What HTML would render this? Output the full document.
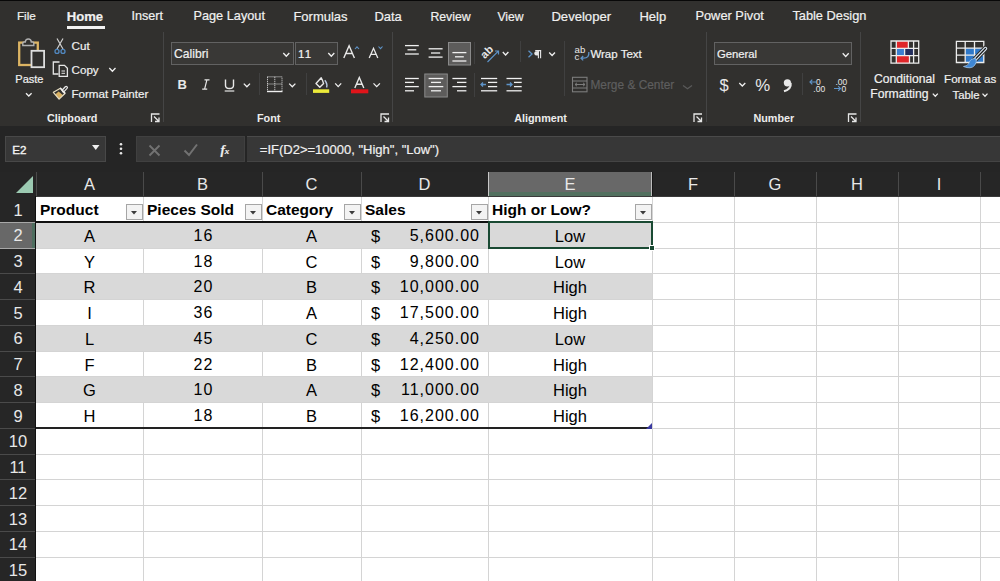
<!DOCTYPE html>
<html><head><meta charset="utf-8">
<style>
*{box-sizing:border-box;margin:0;padding:0}
html,body{width:1000px;height:581px;overflow:hidden;background:#31302e;font-family:"Liberation Sans",sans-serif}
body{position:relative}
.a{position:absolute}
.t{position:absolute;white-space:nowrap;color:#f4f4f4;font-size:13px;line-height:15px;-webkit-text-stroke:0.2px currentColor}
.ch{position:absolute;top:172px;height:24px;color:#e8e8e8;font-size:16.5px;line-height:25px;text-align:center}
.rh{position:absolute;left:0;width:36px;color:#e8e8e8;font-size:16.5px;text-align:center;padding-top:1.5px}
.c{position:absolute;color:#000;font-size:16.5px;line-height:18px;white-space:nowrap}
.b{font-weight:bold;font-size:15.5px}
</style></head><body>

<div class="a" style="left:0;top:0;width:1000px;height:1px;background:#080808"></div>
<div class="a" style="left:0;top:1px;width:1000px;height:125px;background:#31302e"></div>
<div class="a" style="left:0;top:126px;width:1000px;height:46px;background:#252525"></div>
<div class="a" style="left:0;top:172px;width:1000px;height:24px;background:#262626"></div>
<div class="a" style="left:0;top:196px;width:36px;height:385px;background:#262626"></div>
<div class="a" style="left:36px;top:196px;width:964px;height:385px;background:#fff"></div>
<div class="a" style="left:36px;top:221.75px;width:616px;height:25.75px;background:#d9d9d9"></div>
<div class="a" style="left:36px;top:273.25px;width:616px;height:25.75px;background:#d9d9d9"></div>
<div class="a" style="left:36px;top:324.75px;width:616px;height:25.75px;background:#d9d9d9"></div>
<div class="a" style="left:36px;top:376.25px;width:616px;height:25.75px;background:#d9d9d9"></div>
<div class="a" style="left:143px;top:196px;width:1px;height:385px;background:#d4d4d4"></div>
<div class="a" style="left:262px;top:196px;width:1px;height:385px;background:#d4d4d4"></div>
<div class="a" style="left:361px;top:196px;width:1px;height:385px;background:#d4d4d4"></div>
<div class="a" style="left:488px;top:196px;width:1px;height:385px;background:#d4d4d4"></div>
<div class="a" style="left:652px;top:196px;width:1px;height:385px;background:#d4d4d4"></div>
<div class="a" style="left:734px;top:196px;width:1px;height:385px;background:#d4d4d4"></div>
<div class="a" style="left:816px;top:196px;width:1px;height:385px;background:#d4d4d4"></div>
<div class="a" style="left:898px;top:196px;width:1px;height:385px;background:#d4d4d4"></div>
<div class="a" style="left:980px;top:196px;width:1px;height:385px;background:#d4d4d4"></div>
<div class="a" style="left:36px;top:221.75px;width:964px;height:1px;background:#d4d4d4"></div>
<div class="a" style="left:36px;top:247.5px;width:964px;height:1px;background:#d4d4d4"></div>
<div class="a" style="left:36px;top:273.25px;width:964px;height:1px;background:#d4d4d4"></div>
<div class="a" style="left:36px;top:299.0px;width:964px;height:1px;background:#d4d4d4"></div>
<div class="a" style="left:36px;top:324.75px;width:964px;height:1px;background:#d4d4d4"></div>
<div class="a" style="left:36px;top:350.5px;width:964px;height:1px;background:#d4d4d4"></div>
<div class="a" style="left:36px;top:376.25px;width:964px;height:1px;background:#d4d4d4"></div>
<div class="a" style="left:36px;top:402.0px;width:964px;height:1px;background:#d4d4d4"></div>
<div class="a" style="left:36px;top:427.75px;width:964px;height:1px;background:#d4d4d4"></div>
<div class="a" style="left:36px;top:453.5px;width:964px;height:1px;background:#d4d4d4"></div>
<div class="a" style="left:36px;top:479.25px;width:964px;height:1px;background:#d4d4d4"></div>
<div class="a" style="left:36px;top:505.0px;width:964px;height:1px;background:#d4d4d4"></div>
<div class="a" style="left:36px;top:530.75px;width:964px;height:1px;background:#d4d4d4"></div>
<div class="a" style="left:36px;top:556.5px;width:964px;height:1px;background:#d4d4d4"></div>
<div class="a" style="left:36px;top:582.25px;width:964px;height:1px;background:#d4d4d4"></div>
<div class="a" style="left:36px;top:222.75px;width:616px;height:24.75px;background:#d9d9d9"></div>
<div class="a" style="left:36px;top:274.25px;width:616px;height:24.75px;background:#d9d9d9"></div>
<div class="a" style="left:36px;top:325.75px;width:616px;height:24.75px;background:#d9d9d9"></div>
<div class="a" style="left:36px;top:377.25px;width:616px;height:24.75px;background:#d9d9d9"></div>
<div class="a" style="left:36px;top:172px;width:1px;height:24px;background:#4a4a4a"></div>
<div class="a" style="left:143px;top:172px;width:1px;height:24px;background:#4a4a4a"></div>
<div class="a" style="left:262px;top:172px;width:1px;height:24px;background:#4a4a4a"></div>
<div class="a" style="left:361px;top:172px;width:1px;height:24px;background:#4a4a4a"></div>
<div class="a" style="left:488px;top:172px;width:1px;height:24px;background:#4a4a4a"></div>
<div class="a" style="left:652px;top:172px;width:1px;height:24px;background:#4a4a4a"></div>
<div class="a" style="left:734px;top:172px;width:1px;height:24px;background:#4a4a4a"></div>
<div class="a" style="left:816px;top:172px;width:1px;height:24px;background:#4a4a4a"></div>
<div class="a" style="left:898px;top:172px;width:1px;height:24px;background:#4a4a4a"></div>
<div class="a" style="left:980px;top:172px;width:1px;height:24px;background:#4a4a4a"></div>
<div class="a" style="left:0;top:221.75px;width:36px;height:1px;background:#4a4a4a"></div>
<div class="a" style="left:0;top:247.5px;width:36px;height:1px;background:#4a4a4a"></div>
<div class="a" style="left:0;top:273.25px;width:36px;height:1px;background:#4a4a4a"></div>
<div class="a" style="left:0;top:299.0px;width:36px;height:1px;background:#4a4a4a"></div>
<div class="a" style="left:0;top:324.75px;width:36px;height:1px;background:#4a4a4a"></div>
<div class="a" style="left:0;top:350.5px;width:36px;height:1px;background:#4a4a4a"></div>
<div class="a" style="left:0;top:376.25px;width:36px;height:1px;background:#4a4a4a"></div>
<div class="a" style="left:0;top:402.0px;width:36px;height:1px;background:#4a4a4a"></div>
<div class="a" style="left:0;top:427.75px;width:36px;height:1px;background:#4a4a4a"></div>
<div class="a" style="left:0;top:453.5px;width:36px;height:1px;background:#4a4a4a"></div>
<div class="a" style="left:0;top:479.25px;width:36px;height:1px;background:#4a4a4a"></div>
<div class="a" style="left:0;top:505.0px;width:36px;height:1px;background:#4a4a4a"></div>
<div class="a" style="left:0;top:530.75px;width:36px;height:1px;background:#4a4a4a"></div>
<div class="a" style="left:0;top:556.5px;width:36px;height:1px;background:#4a4a4a"></div>
<div class="a" style="left:0;top:582.25px;width:36px;height:1px;background:#4a4a4a"></div>
<div class="a" style="left:488px;top:172px;width:164px;height:24px;background:#686868"></div>
<div class="a" style="left:488px;top:172px;width:1px;height:24px;background:#c8c8c8"></div>
<div class="a" style="left:489px;top:192px;width:163px;height:4px;background:#52705f"></div>
<div class="a" style="left:651px;top:172px;width:1px;height:24px;background:#bdbdbd"></div>
<div class="a" style="left:652px;top:172px;width:1px;height:24px;background:#151515"></div>
<div class="a" style="left:0;top:221.75px;width:36px;height:25.75px;background:#686868"></div>
<div class="a" style="left:0;top:221.75px;width:36px;height:1px;background:#a8a8a8"></div>
<div class="a" style="left:0;top:247.5px;width:36px;height:1px;background:#a8a8a8"></div>
<div class="a" style="left:32px;top:222.75px;width:4px;height:24.75px;background:#4e6e5f"></div>
<div class="a" style="left:36px;top:196px;width:964px;height:1px;background:#3a3a3a"></div>
<div class="a" style="left:35px;top:196px;width:1px;height:385px;background:#111"></div>
<svg class="a" style="left:0;top:172px" width="36" height="24"><path d="M33 4 L33 21 L16 21 Z" fill="#9ccab2"/></svg>
<div class="ch" style="left:36px;width:107px">A</div>
<div class="ch" style="left:143px;width:119px">B</div>
<div class="ch" style="left:262px;width:99px">C</div>
<div class="ch" style="left:361px;width:127px">D</div>
<div class="ch" style="left:488px;width:164px">E</div>
<div class="ch" style="left:652px;width:82px">F</div>
<div class="ch" style="left:734px;width:82px">G</div>
<div class="ch" style="left:816px;width:82px">H</div>
<div class="ch" style="left:898px;width:82px">I</div>
<div class="rh" style="top:196.0px;height:25.75px;line-height:25.75px">1</div>
<div class="rh" style="top:221.75px;height:25.75px;line-height:25.75px">2</div>
<div class="rh" style="top:247.5px;height:25.75px;line-height:25.75px">3</div>
<div class="rh" style="top:273.25px;height:25.75px;line-height:25.75px">4</div>
<div class="rh" style="top:299.0px;height:25.75px;line-height:25.75px">5</div>
<div class="rh" style="top:324.75px;height:25.75px;line-height:25.75px">6</div>
<div class="rh" style="top:350.5px;height:25.75px;line-height:25.75px">7</div>
<div class="rh" style="top:376.25px;height:25.75px;line-height:25.75px">8</div>
<div class="rh" style="top:402.0px;height:25.75px;line-height:25.75px">9</div>
<div class="rh" style="top:427.75px;height:25.75px;line-height:25.75px">10</div>
<div class="rh" style="top:453.5px;height:25.75px;line-height:25.75px">11</div>
<div class="rh" style="top:479.25px;height:25.75px;line-height:25.75px">12</div>
<div class="rh" style="top:505.0px;height:25.75px;line-height:25.75px">13</div>
<div class="rh" style="top:530.75px;height:25.75px;line-height:25.75px">14</div>
<div class="rh" style="top:556.5px;height:25.75px;line-height:25.75px">15</div>
<div class="c b" style="left:40px;top:201.0px">Product</div>
<div class="a" style="left:126px;top:204px;width:17px;height:16px;border:1px solid #a6a6a6;background:#f3f3f3"></div>
<svg class="a" style="left:126px;top:204px" width="17" height="16"><path d="M5 7 L11 7 L8 10.5 Z" fill="#3c3c3c"/></svg>
<div class="c b" style="left:147px;top:201.0px">Pieces Sold</div>
<div class="a" style="left:245px;top:204px;width:17px;height:16px;border:1px solid #a6a6a6;background:#f3f3f3"></div>
<svg class="a" style="left:245px;top:204px" width="17" height="16"><path d="M5 7 L11 7 L8 10.5 Z" fill="#3c3c3c"/></svg>
<div class="c b" style="left:266px;top:201.0px">Category</div>
<div class="a" style="left:344px;top:204px;width:17px;height:16px;border:1px solid #a6a6a6;background:#f3f3f3"></div>
<svg class="a" style="left:344px;top:204px" width="17" height="16"><path d="M5 7 L11 7 L8 10.5 Z" fill="#3c3c3c"/></svg>
<div class="c b" style="left:365px;top:201.0px">Sales</div>
<div class="a" style="left:471px;top:204px;width:17px;height:16px;border:1px solid #a6a6a6;background:#f3f3f3"></div>
<svg class="a" style="left:471px;top:204px" width="17" height="16"><path d="M5 7 L11 7 L8 10.5 Z" fill="#3c3c3c"/></svg>
<div class="c b" style="left:492px;top:201.0px">High or Low?</div>
<div class="a" style="left:635px;top:204px;width:17px;height:16px;border:1px solid #a6a6a6;background:#f3f3f3"></div>
<svg class="a" style="left:635px;top:204px" width="17" height="16"><path d="M5 7 L11 7 L8 10.5 Z" fill="#3c3c3c"/></svg>
<div class="a" style="left:36px;top:221px;width:616px;height:2px;background:#111"></div>
<div class="a" style="left:36px;top:427px;width:616px;height:2px;background:#222"></div>
<div class="c" style="left:36px;width:107px;text-align:center;top:226.95px">A</div>
<div class="c" style="left:262px;width:99px;text-align:center;top:226.95px">A</div>
<div class="c" style="left:488px;width:164px;text-align:center;top:226.95px">Low</div>
<div class="c" style="left:144px;width:119px;text-align:center;top:226.95px;font-size:16px;letter-spacing:1.2px">16</div>
<div class="c" style="left:371px;top:226.95px;font-size:16.5px">$</div>
<div class="c" style="left:380px;width:100px;text-align:right;top:226.95px;font-size:16px;letter-spacing:1px">5,600.00</div>
<div class="c" style="left:36px;width:107px;text-align:center;top:252.7px">Y</div>
<div class="c" style="left:262px;width:99px;text-align:center;top:252.7px">C</div>
<div class="c" style="left:488px;width:164px;text-align:center;top:252.7px">Low</div>
<div class="c" style="left:144px;width:119px;text-align:center;top:252.7px;font-size:16px;letter-spacing:1.2px">18</div>
<div class="c" style="left:371px;top:252.7px;font-size:16.5px">$</div>
<div class="c" style="left:380px;width:100px;text-align:right;top:252.7px;font-size:16px;letter-spacing:1px">9,800.00</div>
<div class="c" style="left:36px;width:107px;text-align:center;top:278.45px">R</div>
<div class="c" style="left:262px;width:99px;text-align:center;top:278.45px">B</div>
<div class="c" style="left:488px;width:164px;text-align:center;top:278.45px">High</div>
<div class="c" style="left:144px;width:119px;text-align:center;top:278.45px;font-size:16px;letter-spacing:1.2px">20</div>
<div class="c" style="left:371px;top:278.45px;font-size:16.5px">$</div>
<div class="c" style="left:380px;width:100px;text-align:right;top:278.45px;font-size:16px;letter-spacing:1px">10,000.00</div>
<div class="c" style="left:36px;width:107px;text-align:center;top:304.2px">I</div>
<div class="c" style="left:262px;width:99px;text-align:center;top:304.2px">A</div>
<div class="c" style="left:488px;width:164px;text-align:center;top:304.2px">High</div>
<div class="c" style="left:144px;width:119px;text-align:center;top:304.2px;font-size:16px;letter-spacing:1.2px">36</div>
<div class="c" style="left:371px;top:304.2px;font-size:16.5px">$</div>
<div class="c" style="left:380px;width:100px;text-align:right;top:304.2px;font-size:16px;letter-spacing:1px">17,500.00</div>
<div class="c" style="left:36px;width:107px;text-align:center;top:329.95px">L</div>
<div class="c" style="left:262px;width:99px;text-align:center;top:329.95px">C</div>
<div class="c" style="left:488px;width:164px;text-align:center;top:329.95px">Low</div>
<div class="c" style="left:144px;width:119px;text-align:center;top:329.95px;font-size:16px;letter-spacing:1.2px">45</div>
<div class="c" style="left:371px;top:329.95px;font-size:16.5px">$</div>
<div class="c" style="left:380px;width:100px;text-align:right;top:329.95px;font-size:16px;letter-spacing:1px">4,250.00</div>
<div class="c" style="left:36px;width:107px;text-align:center;top:355.7px">F</div>
<div class="c" style="left:262px;width:99px;text-align:center;top:355.7px">B</div>
<div class="c" style="left:488px;width:164px;text-align:center;top:355.7px">High</div>
<div class="c" style="left:144px;width:119px;text-align:center;top:355.7px;font-size:16px;letter-spacing:1.2px">22</div>
<div class="c" style="left:371px;top:355.7px;font-size:16.5px">$</div>
<div class="c" style="left:380px;width:100px;text-align:right;top:355.7px;font-size:16px;letter-spacing:1px">12,400.00</div>
<div class="c" style="left:36px;width:107px;text-align:center;top:381.45px">G</div>
<div class="c" style="left:262px;width:99px;text-align:center;top:381.45px">A</div>
<div class="c" style="left:488px;width:164px;text-align:center;top:381.45px">High</div>
<div class="c" style="left:144px;width:119px;text-align:center;top:381.45px;font-size:16px;letter-spacing:1.2px">10</div>
<div class="c" style="left:371px;top:381.45px;font-size:16.5px">$</div>
<div class="c" style="left:380px;width:100px;text-align:right;top:381.45px;font-size:16px;letter-spacing:1px">11,000.00</div>
<div class="c" style="left:36px;width:107px;text-align:center;top:407.2px">H</div>
<div class="c" style="left:262px;width:99px;text-align:center;top:407.2px">B</div>
<div class="c" style="left:488px;width:164px;text-align:center;top:407.2px">High</div>
<div class="c" style="left:144px;width:119px;text-align:center;top:407.2px;font-size:16px;letter-spacing:1.2px">18</div>
<div class="c" style="left:371px;top:407.2px;font-size:16.5px">$</div>
<div class="c" style="left:380px;width:100px;text-align:right;top:407.2px;font-size:16px;letter-spacing:1px">16,200.00</div>
<div class="a" style="left:488px;top:220.75px;width:165px;height:27.75px;border:2px solid #1a4a33"></div>
<div class="a" style="left:649px;top:244.5px;width:6px;height:6px;background:#1a4a33;border:1px solid #fff"></div>
<svg class="a" style="left:646px;top:423px" width="7" height="7"><path d="M6 0 L6 6 L0 6 Z" fill="#3a3aa0"/></svg>
<div class="t" style="left:16.9px;top:10.9px;font-size:11.8px;line-height:11.8px;font-weight:normal;color:#f0f0f0;">File</div>
<div class="t" style="left:66.7px;top:9.8px;font-size:13.1px;line-height:13.1px;font-weight:bold;color:#f0f0f0;">Home</div>
<div class="t" style="left:131.4px;top:10.2px;font-size:12.6px;line-height:12.6px;font-weight:normal;color:#f0f0f0;">Insert</div>
<div class="t" style="left:193.4px;top:10.1px;font-size:12.75px;line-height:12.75px;font-weight:normal;color:#f0f0f0;">Page Layout</div>
<div class="t" style="left:293.4px;top:9.9px;font-size:13.0px;line-height:13.0px;font-weight:normal;color:#f0f0f0;">Formulas</div>
<div class="t" style="left:374.4px;top:9.9px;font-size:13.0px;line-height:13.0px;font-weight:normal;color:#f0f0f0;">Data</div>
<div class="t" style="left:430.4px;top:10.5px;font-size:12.3px;line-height:12.3px;font-weight:normal;color:#f0f0f0;">Review</div>
<div class="t" style="left:497.4px;top:10.6px;font-size:12.2px;line-height:12.2px;font-weight:normal;color:#f0f0f0;">View</div>
<div class="t" style="left:551.4px;top:9.8px;font-size:13.1px;line-height:13.1px;font-weight:normal;color:#f0f0f0;">Developer</div>
<div class="t" style="left:639.4px;top:9.9px;font-size:13.0px;line-height:13.0px;font-weight:normal;color:#f0f0f0;">Help</div>
<div class="t" style="left:695.4px;top:10.0px;font-size:12.85px;line-height:12.85px;font-weight:normal;color:#f0f0f0;">Power Pivot</div>
<div class="t" style="left:792.4px;top:10.1px;font-size:12.8px;line-height:12.8px;font-weight:normal;color:#f0f0f0;">Table Design</div>
<div class="a" style="left:67px;top:25.5px;width:38px;height:3px;background:#f2f2f2"></div>
<div class="a" style="left:162.5px;top:32px;width:1px;height:90px;background:#454545"></div>
<div class="a" style="left:392px;top:32px;width:1px;height:90px;background:#454545"></div>
<div class="a" style="left:706px;top:32px;width:1px;height:90px;background:#454545"></div>
<div class="a" style="left:860px;top:32px;width:1px;height:90px;background:#454545"></div>
<div class="a" style="left:258.8px;top:73px;width:1px;height:22px;background:#404040"></div>
<div class="a" style="left:305.5px;top:73px;width:1px;height:22px;background:#404040"></div>
<div class="a" style="left:474px;top:42px;width:1px;height:22px;background:#404040"></div>
<div class="a" style="left:474px;top:73px;width:1px;height:24px;background:#404040"></div>
<div class="a" style="left:519.5px;top:41px;width:1px;height:21px;background:#404040"></div>
<div class="a" style="left:564px;top:41px;width:1px;height:55px;background:#404040"></div>
<div class="a" style="left:802px;top:73px;width:1px;height:22px;background:#404040"></div>
<div class="t" style="left:46.9px;top:112.7px;font-size:10.85px;line-height:10.85px;font-weight:bold;color:#ececec;-webkit-text-stroke:0">Clipboard</div>
<div class="t" style="left:256.9px;top:112.7px;font-size:10.85px;line-height:10.85px;font-weight:bold;color:#ececec;-webkit-text-stroke:0">Font</div>
<div class="t" style="left:514.2px;top:112.8px;font-size:10.8px;line-height:10.8px;font-weight:bold;color:#ececec;-webkit-text-stroke:0">Alignment</div>
<div class="t" style="left:753.4px;top:112.8px;font-size:10.8px;line-height:10.8px;font-weight:bold;color:#ececec;-webkit-text-stroke:0">Number</div>
<div class="t" style="left:15.3px;top:73.6px;font-size:11.0px;line-height:11.0px;font-weight:normal;color:#f0f0f0;">Paste</div>
<div class="t" style="left:71.6px;top:40.0px;font-size:11.7px;line-height:11.7px;font-weight:normal;color:#f0f0f0;">Cut</div>
<div class="t" style="left:71.6px;top:63.7px;font-size:11.6px;line-height:11.6px;font-weight:normal;color:#f0f0f0;">Copy</div>
<div class="t" style="left:71.4px;top:87.5px;font-size:11.65px;line-height:11.65px;font-weight:normal;color:#f0f0f0;">Format Painter</div>
<div class="a" style="left:171px;top:42px;width:122.5px;height:23px;border:1px solid #626262;background:#393836"></div>
<div class="a" style="left:295px;top:42px;width:43px;height:23px;border:1px solid #626262;background:#393836"></div>
<div class="t" style="left:174.1px;top:48.4px;font-size:12.1px;line-height:12.1px;font-weight:normal;color:#f0f0f0;">Calibri</div>
<div class="t" style="left:298.0px;top:48.9px;font-size:11.5px;line-height:11.5px;font-weight:normal;color:#f4f4f4;letter-spacing:1.2px">11</div>
<div class="t" style="left:590.4px;top:49.1px;font-size:11.5px;line-height:11.5px;font-weight:normal;color:#f0f0f0;">Wrap Text</div>
<div class="t" style="left:590.4px;top:80.1px;font-size:11.9px;line-height:11.9px;font-weight:normal;color:#5e5e5e;">Merge &amp; Center</div>
<div class="a" style="left:714px;top:42px;width:138px;height:23px;border:1px solid #626262;background:#393836"></div>
<div class="t" style="left:716.9px;top:48.9px;font-size:11.3px;line-height:11.3px;font-weight:normal;color:#f0f0f0;">General</div>
<div class="t" style="left:874.1px;top:73.1px;font-size:12.15px;line-height:12.15px;font-weight:normal;color:#f0f0f0;">Conditional</div>
<div class="t" style="left:870.3px;top:88.3px;font-size:12.2px;line-height:12.2px;font-weight:normal;color:#f0f0f0;">Formatting</div>
<div class="t" style="left:944.1px;top:72.8px;font-size:11.6px;line-height:11.6px;font-weight:normal;color:#f0f0f0;">Format as</div>
<div class="t" style="left:952.5px;top:89.8px;font-size:11.3px;line-height:11.3px;font-weight:normal;color:#f0f0f0;">Table</div>
<svg class="a" style="left:0;top:0" width="1000" height="172"><rect x="19.2" y="42.6" width="18.6" height="22.4" fill="none" stroke="#dcb463" stroke-width="2.3"/><path d="M22.8 45.5 L22.8 43.2 Q22.8 42 24.2 42 L25.3 42 Q25.5 39 28.3 39 Q31.1 39 31.3 42 L32.4 42 Q33.8 42 33.8 43.2 L33.8 45.5 Z" fill="#31302e" stroke="#b0b0b0" stroke-width="1.4"/><rect x="31.5" y="50.8" width="12.6" height="16.4" fill="#31302e" stroke="#dedede" stroke-width="1.8"/><path d="M26 93.2 L28.8 96.0 L31.6 93.2" fill="none" stroke="#f0f0f0" stroke-width="1.3"/><path d="M57 38.5 L63 49 M63 38.5 L57 49" stroke="#d0d0d0" stroke-width="1.2" fill="none"/><circle cx="57" cy="51.4" r="2" fill="none" stroke="#5188c0" stroke-width="1.3"/><circle cx="63" cy="51.4" r="2" fill="none" stroke="#5188c0" stroke-width="1.3"/><path d="M59.5 62 L53.3 62 L53.3 74 L58.5 74" fill="none" stroke="#e6e6e6" stroke-width="1.3"/><path d="M59.2 65.3 L64.5 65.3 L67.4 68.2 L67.4 76.3 L59.2 76.3 Z" fill="none" stroke="#e6e6e6" stroke-width="1.3"/><path d="M61.5 71 L65 71 M61.5 73.3 L65 73.3" stroke="#e6e6e6" stroke-width="1"/><path d="M109.3 68 L112.39999999999999 71.2 L115.5 68" fill="none" stroke="#f0f0f0" stroke-width="1.3"/><path d="M66.2 87.6 L63.4 90.6" stroke="#e8e8e8" stroke-width="3.6" stroke-linecap="round"/><path d="M66.2 87.6 L63.4 90.6" stroke="#31302e" stroke-width="1.2" stroke-linecap="round"/><path d="M55.2 94.4 L59.2 99 L63 95.2 L58.6 91.4 Z" fill="#d9b060"/><path d="M60.4 88.2 L53.4 92.3 L59.1 99.1 L64.9 93.5 Z" fill="none" stroke="#e6dcc0" stroke-width="1.3" stroke-linejoin="round"/><path d="M60.2 88 L65.2 93.6" stroke="#f0f0f0" stroke-width="1.5"/><path d="M151.5 122 L151.5 114 L159.5 114" fill="none" stroke="#e6e6e6" stroke-width="1.3"/><path d="M154.0 116.5 L159.0 121.5 M159.0 117.5 L159.0 121.5 L155.0 121.5" fill="none" stroke="#e6e6e6" stroke-width="1.3"/><path d="M381 122 L381 114 L389 114" fill="none" stroke="#e6e6e6" stroke-width="1.3"/><path d="M383.5 116.5 L388.5 121.5 M388.5 117.5 L388.5 121.5 L384.5 121.5" fill="none" stroke="#e6e6e6" stroke-width="1.3"/><path d="M694 122 L694 114 L702 114" fill="none" stroke="#e6e6e6" stroke-width="1.3"/><path d="M696.5 116.5 L701.5 121.5 M701.5 117.5 L701.5 121.5 L697.5 121.5" fill="none" stroke="#e6e6e6" stroke-width="1.3"/><path d="M848.5 122 L848.5 114 L856.5 114" fill="none" stroke="#e6e6e6" stroke-width="1.3"/><path d="M851.0 116.5 L856.0 121.5 M856.0 117.5 L856.0 121.5 L852.0 121.5" fill="none" stroke="#e6e6e6" stroke-width="1.3"/><path d="M283.3 53 L286.3 56.3 L289.3 53" fill="none" stroke="#f0f0f0" stroke-width="1.3"/><path d="M328.3 53 L331.3 56.3 L334.3 53" fill="none" stroke="#f0f0f0" stroke-width="1.3"/><path d="M343.8 58 L349.1 45.8 L354.4 58 M345.8 53.5 L352.4 53.5" fill="none" stroke="#e8e8e8" stroke-width="1.4"/><path d="M355 49 L357 46.8 L359 49" fill="none" stroke="#5e93c8" stroke-width="1.1"/><path d="M369.2 58 L373.5 48.3 L377.8 58 M370.8 54.3 L376.2 54.3" fill="none" stroke="#e8e8e8" stroke-width="1.3"/><path d="M378.5 46.5 L380.5 48.7 L382.5 46.5" fill="none" stroke="#5e93c8" stroke-width="1.1"/><text x="177.6" y="89.2" font-family="Liberation Sans" font-weight="bold" font-size="13" fill="#e8e8e8">B</text><path d="M204.5 79.8 L209.5 79.8 M202.2 89.2 L207.2 89.2 M206.9 79.8 L204.6 89.2" stroke="#e8e8e8" stroke-width="1.2" fill="none"/><path d="M225.5 79.5 L225.5 85.5 Q225.5 88.5 229.5 88.5 Q233.5 88.5 233.5 85.5 L233.5 79.5" fill="none" stroke="#e8e8e8" stroke-width="1.4"/><path d="M224.7 91 L234.3 91" stroke="#e8e8e8" stroke-width="1.2"/><path d="M243.8 83.6 L246.9 86.8 L250.0 83.6" fill="none" stroke="#f0f0f0" stroke-width="1.3"/><path d="M267.5 76.8 L282 76.8 L282 91 M267.5 76.8 L267.5 91 M267.5 84 L282 84 M274.8 76.8 L274.8 91" fill="none" stroke="#e0e0e0" stroke-width="1" stroke-dasharray="1 1"/><path d="M267 91.5 L282.5 91.5" stroke="#f0f0f0" stroke-width="1.4"/><path d="M289.2 83.6 L292.3 86.8 L295.4 83.6" fill="none" stroke="#f0f0f0" stroke-width="1.3"/><path d="M316 83.4 L321.2 77.8 Q322.6 80 323.6 83.6 L319.8 87.3 Z" fill="none" stroke="#e8e8e8" stroke-width="1.4" stroke-linejoin="round"/><path d="M324.8 80.2 Q327.8 84 326.6 87.4" fill="none" stroke="#b8c8e0" stroke-width="1.4"/><rect x="313" y="89.3" width="16.2" height="3.6" fill="#ecea3a"/><path d="M335.2 83.4 L338.2 86.60000000000001 L341.2 83.4" fill="none" stroke="#f0f0f0" stroke-width="1.3"/><path d="M354.8 88 L359.3 77.5 L363.8 88 M356.5 84.3 L362.1 84.3" fill="none" stroke="#e8e8e8" stroke-width="1.4"/><rect x="351" y="89.3" width="17.3" height="4" fill="#e0141a"/><path d="M373.5 83.4 L376.7 86.60000000000001 L379.9 83.4" fill="none" stroke="#f0f0f0" stroke-width="1.3"/><path d="M405 45.6 L418.8 45.6" stroke="#f0f0f0" stroke-width="1.3"/><path d="M407.5 49.8 L416.3 49.8" stroke="#f0f0f0" stroke-width="1.3"/><path d="M405 54.0 L418.8 54.0" stroke="#f0f0f0" stroke-width="1.3"/><path d="M428.6 48.8 L442.6 48.8" stroke="#f0f0f0" stroke-width="1.3"/><path d="M431 53.0 L440.2 53.0" stroke="#f0f0f0" stroke-width="1.3"/><path d="M428.6 57.1 L442.6 57.1" stroke="#f0f0f0" stroke-width="1.3"/><rect x="448.5" y="42.5" width="22" height="22.5" fill="#5d5c5b" stroke="#8a8a8a" stroke-width="1"/><path d="M452.4 52.6 L466.4 52.6" stroke="#f0f0f0" stroke-width="1.3"/><path d="M455 56.8 L463.8 56.8" stroke="#f0f0f0" stroke-width="1.3"/><path d="M452.4 61.0 L466.4 61.0" stroke="#f0f0f0" stroke-width="1.3"/><text x="0" y="0" transform="translate(484.8,59.2) rotate(-45)" font-family="Liberation Sans" font-weight="bold" font-size="11" fill="#e8e8e8">ab</text><path d="M487.5 62 L498.3 51.2 M495 51 L498.5 51 L498.5 54.5" fill="none" stroke="#5e93c8" stroke-width="1.2"/><path d="M502.8 52 L505.6 55 L508.40000000000003 52" fill="none" stroke="#f0f0f0" stroke-width="1.3"/><path d="M528.5 50.8 L532 54 L528.5 57.2" fill="none" stroke="#5e93c8" stroke-width="1.3"/><path d="M535.2 50.6 L541.2 50.6 M538.4 50.6 L538.4 58.2 M540.6 50.6 L540.6 58.2" fill="none" stroke="#e8e8e8" stroke-width="1.1"/><path d="M538.4 51 Q534.3 51 534.3 53.4 Q534.3 55.6 538.4 55.6 Z" fill="#e8e8e8"/><path d="M549.2 52.5 L552.1 55.5 L555.0 52.5" fill="none" stroke="#f0f0f0" stroke-width="1.3"/><path d="M405 78.5 L418.8 78.5" stroke="#f0f0f0" stroke-width="1.3"/><path d="M405 82.4 L414 82.4" stroke="#f0f0f0" stroke-width="1.3"/><path d="M405 86.6 L418.8 86.6" stroke="#f0f0f0" stroke-width="1.3"/><path d="M405 90.8 L414 90.8" stroke="#f0f0f0" stroke-width="1.3"/><rect x="424.8" y="74" width="22.5" height="23" fill="#5d5c5b" stroke="#8a8a8a" stroke-width="1"/><path d="M428.6 78.5 L443.3 78.5" stroke="#f0f0f0" stroke-width="1.3"/><path d="M431 82.4 L441 82.4" stroke="#f0f0f0" stroke-width="1.3"/><path d="M428.6 86.6 L443.3 86.6" stroke="#f0f0f0" stroke-width="1.3"/><path d="M431 90.8 L441 90.8" stroke="#f0f0f0" stroke-width="1.3"/><path d="M452.4 78.5 L466.4 78.5" stroke="#f0f0f0" stroke-width="1.3"/><path d="M457 82.4 L466.4 82.4" stroke="#f0f0f0" stroke-width="1.3"/><path d="M452.4 86.6 L466.4 86.6" stroke="#f0f0f0" stroke-width="1.3"/><path d="M457 90.8 L466.4 90.8" stroke="#f0f0f0" stroke-width="1.3"/><path d="M481 78.5 L497.2 78.5" stroke="#f0f0f0" stroke-width="1.3"/><path d="M488 82.4 L497.2 82.4" stroke="#f0f0f0" stroke-width="1.3"/><path d="M488 86.6 L497.2 86.6" stroke="#f0f0f0" stroke-width="1.3"/><path d="M481 90.8 L497.2 90.8" stroke="#f0f0f0" stroke-width="1.3"/><path d="M486 84.5 L481 84.5 M483 82.5 L481 84.5 L483 86.5" fill="none" stroke="#5e93c8" stroke-width="1.3"/><path d="M506.5 78.5 L521.7 78.5" stroke="#f0f0f0" stroke-width="1.3"/><path d="M514 82.4 L521.7 82.4" stroke="#f0f0f0" stroke-width="1.3"/><path d="M514 86.6 L521.7 86.6" stroke="#f0f0f0" stroke-width="1.3"/><path d="M506.5 90.8 L521.7 90.8" stroke="#f0f0f0" stroke-width="1.3"/><path d="M506.5 84.5 L512 84.5 M510 82.5 L512 84.5 L510 86.5" fill="none" stroke="#5e93c8" stroke-width="1.3"/><text x="574.6" y="52.8" font-family="Liberation Sans" font-size="9.6" fill="#e8e8e8">ab</text><text x="574.4" y="60.2" font-family="Liberation Sans" font-size="9.6" fill="#e8e8e8">c</text><path d="M588.8 52 Q589.6 58.2 583.5 58.2 L581 58.2 M583.2 56 L581 58.2 L583.2 60.4" fill="none" stroke="#5e93c8" stroke-width="1.3"/><rect x="572.5" y="77.3" width="14.5" height="14.5" fill="none" stroke="#7c7c7c" stroke-width="1.1"/><path d="M572.5 81 L587 81 M572.5 88 L587 88 M575 84.5 L585 84.5 M577 82.8 L575 84.5 L577 86.2 M583 82.8 L585 84.5 L583 86.2" fill="none" stroke="#7c7c7c" stroke-width="1"/><path d="M683 85.5 L687.5 88.7 L692 85.5" fill="none" stroke="#5a5a5a" stroke-width="1.3"/><path d="M842.7 53.3 L845.7 56.5 L848.7 53.3" fill="none" stroke="#f0f0f0" stroke-width="1.3"/><text x="719.6" y="90.6" font-family="Liberation Sans" font-size="16.5" fill="#e8e8e8">$</text><path d="M739.3 83 L742.3 86 L745.3 83" fill="none" stroke="#f0f0f0" stroke-width="1.3"/><text x="755.2" y="91.4" font-family="Liberation Sans" font-size="16.8" fill="#e8e8e8">%</text><circle cx="787.4" cy="82.8" r="3.6" fill="#e8e8e8"/><path d="M790.6 83 Q791.5 89 784 91.3" fill="none" stroke="#e8e8e8" stroke-width="2.2"/><text x="816" y="85.2" font-family="Liberation Sans" font-size="8.5" fill="#e8e8e8">0</text><text x="813.3" y="92.4" font-family="Liberation Sans" font-size="8.5" fill="#e8e8e8">.00</text><path d="M816 82 L810 82 M812.3 79.6 L810 82 L812.3 84.4" fill="none" stroke="#5e93c8" stroke-width="1.2"/><text x="835.5" y="85.2" font-family="Liberation Sans" font-size="8.5" fill="#e8e8e8">.00</text><text x="841.5" y="92.4" font-family="Liberation Sans" font-size="8.5" fill="#e8e8e8">0</text><path d="M834 88.5 L840.5 88.5 M838.2 86.1 L840.5 88.5 L838.2 90.9" fill="none" stroke="#5e93c8" stroke-width="1.2"/><rect x="896.3" y="41" width="12.1" height="7.4" fill="#e0262a"/><rect x="896.3" y="48.4" width="8.3" height="7.2" fill="#3d7fd0"/><rect x="904.6" y="48.4" width="9" height="7.2" fill="#232f5e"/><rect x="896.3" y="55.6" width="13.2" height="7.7" fill="#e0262a"/><path d="M891 41 L918.7 41 L918.7 63.2 L891 63.2 Z M891 48.4 L918.7 48.4 M891 55.6 L918.7 55.6 M896.3 41 L896.3 63.2 M913.6 41 L913.6 63.2 M908.4 41 L908.4 48.4 M904.6 48.4 L904.6 55.6 M909.5 55.6 L909.5 63.2" fill="none" stroke="#ececec" stroke-width="1.3"/><rect x="965.2" y="48.1" width="18.8" height="14.5" fill="#2f78c8"/><path d="M956.4 41.4 L983.8 41.4 L983.8 62.5 L956.4 62.5 Z M956.4 48.1 L983.8 48.1 M956.4 55.2 L983.8 55.2 M965.2 41.4 L965.2 62.5 M974.5 41.4 L974.5 62.5" fill="none" stroke="#ececec" stroke-width="1.3"/><path d="M985.5 48.5 L975 59.5" stroke="#31302e" stroke-width="5.5" stroke-linecap="round"/><path d="M985.5 48.5 L975 59.5" stroke="#dce8f4" stroke-width="3.4" stroke-linecap="round"/><path d="M985.5 48.5 L975 59.5" stroke="#1a1a1a" stroke-width="1.2" stroke-linecap="round"/><path d="M975.8 58.5 Q970 58.5 969 63 Q968 66.2 963.5 66.5 Q971 69.5 974.5 65.5 Q977.5 62 975.8 58.5 Z" fill="#3f87d4" stroke="#9cc3ea" stroke-width="0.8"/><path d="M932.8 93.6 L935.3 96.19999999999999 L937.8 93.6" fill="none" stroke="#f0f0f0" stroke-width="1.3"/><path d="M982.5 93.6 L985.0 96.19999999999999 L987.5 93.6" fill="none" stroke="#f0f0f0" stroke-width="1.3"/></svg>
<div class="a" style="left:5px;top:136px;width:101px;height:26px;border:1px solid #484848;background:#373737"></div>
<div class="t" style="left:12.3px;top:144.3px;font-size:11.6px;line-height:12px;color:#f4f4f4;-webkit-text-stroke:0.35px #f4f4f4">E2</div>
<div class="a" style="left:136px;top:136px;width:109px;height:26px;border:1px solid #404040;background:#383838"></div>
<div class="t" style="left:220.5px;top:142.5px;font-family:'Liberation Serif',serif;font-style:italic;font-weight:bold;font-size:13px;line-height:13px;color:#f0f0f0">f<span style="font-size:9px">x</span></div>
<div class="a" style="left:247px;top:136px;width:753px;height:26px;border-top:1px solid #4a4a4a;border-bottom:1px solid #444;background:#373737"></div>
<div class="t" style="left:259.8px;top:143.4px;font-size:13px;line-height:13px;color:#f0f0f0">=IF(D2&gt;=10000, "High", "Low")</div>
<svg class="a" style="left:0;top:126px" width="1000" height="46"><path d="M92 19 L99.5 19 L95.75 24 Z" fill="#f0f0f0"/><circle cx="121" cy="18.3" r="1.3" fill="#e8e8e8"/><circle cx="121" cy="22.8" r="1.3" fill="#e8e8e8"/><circle cx="121" cy="27.3" r="1.3" fill="#e8e8e8"/><path d="M149.5 19.5 L159.5 29.5 M159.5 19.5 L149.5 29.5" stroke="#727272" stroke-width="1.9"/><path d="M184.5 24.5 L189 29 L197 18.5" fill="none" stroke="#727272" stroke-width="2"/></svg>
</body></html>
